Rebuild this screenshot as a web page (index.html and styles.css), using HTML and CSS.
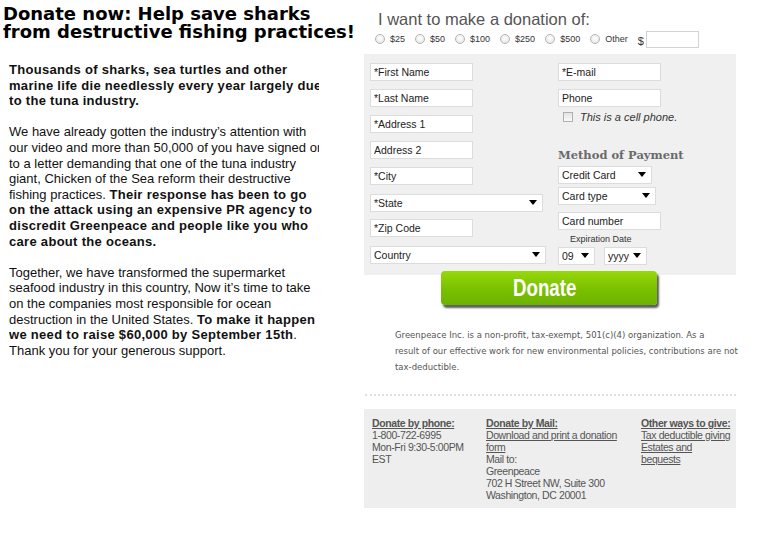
FILE: index.html
```html
<!DOCTYPE html>
<html lang="en">
<head>
    <meta charset="UTF-8">
    <title>Donate now: Help save sharks</title>
    <link rel="stylesheet" href="styles.css">
</head>
<body>
    <div class="story">
        <h1>Donate now: Help save sharks from destructive fishing practices!</h1>
        <div class="story-clip">
            <div class="story-text">
                <p><b>Thousands of sharks, sea turtles and other marine life die needlessly every year largely due to the tuna industry.</b></p>
                <p>We have already gotten the industry’s attention with our video and more than 50,000 of you have signed on to a letter demanding that one of the tuna industry giant, Chicken of the Sea reform their destructive fishing practices. <b>Their response has been to go on the attack using an expensive PR agency to discredit Greenpeace and people like you who care about the oceans.</b></p>
                <p>Together, we have transformed the supermarket seafood industry in this country, Now it’s time to take on the companies most responsible for ocean destruction in the United States. <b>To make it happen we need to raise $60,000 by September 15th</b>. Thank you for your generous support.</p>
            </div>
        </div>
    </div>

    <div class="donate">
        <h2>I want to make a donation of:</h2>
        <div class="amounts">
            <label><input type="radio" name="amount"> $25</label>
            <label><input type="radio" name="amount"> $50</label>
            <label><input type="radio" name="amount"> $100</label>
            <label><input type="radio" name="amount"> $250</label>
            <label><input type="radio" name="amount"> $500</label>
            <label><input type="radio" name="amount"> Other</label>
            <span class="dollar">$</span>
            <input type="text" class="other-amount">
        </div>

        <form class="panel">
            <div class="col">
                <input type="text" class="field" value="*First Name">
                <input type="text" class="field" value="*Last Name">
                <input type="text" class="field" value="*Address 1">
                <input type="text" class="field" value="Address 2">
                <input type="text" class="field" value="*City">
                <span class="pick wide"><select><option>*State</option></select></span>
                <input type="text" class="field" value="*Zip Code">
                <span class="pick wider"><select><option>Country</option></select></span>
            </div>
            <div class="col">
                <input type="text" class="field" value="*E-mail">
                <input type="text" class="field" value="Phone">
                <label class="cell"><input type="checkbox"> This is a cell phone.</label>
                <h3>Method of Payment</h3>
                <span class="pick card"><select><option>Credit Card</option></select></span>
                <span class="pick card type"><select><option>Card type</option></select></span>
                <input type="text" class="field number" value="Card number">
                <div class="expiry">
                    <div class="expiry-label">Expiration Date</div>
                    <div class="expiry-row">
                        <span class="pick month"><select><option>09</option></select></span>
                        <span class="pick year"><select><option>yyyy</option></select></span>
                    </div>
                </div>
            </div>
        </form>

        <div class="submit-row">
            <button type="button" class="donate-btn"><span>Donate</span></button>
        </div>

        <p class="disclaimer">Greenpeace Inc. is a non-profit, tax-exempt, 501(c)(4) organization. As a<br>result of our effective work for new environmental policies, contributions are not tax-deductible.</p>

        <div class="dots"></div>

        <div class="ways">
            <div class="way phone">
                <a href="#">Donate by phone:</a><br>
                1-800-722-6995<br>
                Mon-Fri 9:30-5:00PM<br>
                EST
            </div>
            <div class="way mail">
                <a href="#">Donate by Mail:</a><br>
                <a href="#">Download and print a donation form</a><br>
                Mail to:<br>
                Greenpeace<br>
                702 H Street NW, Suite 300<br>
                Washington, DC 20001
            </div>
            <div class="way other">
                <a href="#">Other ways to give:</a><br>
                <a href="#">Tax deductible giving</a><br>
                <a href="#">Estates and bequests</a>
            </div>
        </div>
    </div>
</body>
</html>
```

FILE: styles.css
```css
body {
    margin: 0;
    background: #fff;
    color: #000;
    font-family: "Liberation Sans", Arial, sans-serif;
    display: flex;
    align-items: flex-start;
}

/* left story column */
.story {
    width: 364px;
    flex: none;
}

h1 {
    margin: 5px 0 0 3px;
    font-family: "DejaVu Sans", Verdana, sans-serif;
    font-size: 18px;
    line-height: 18px;
    font-weight: bold;
    width: 355px;
}

.story-clip {
    margin: 21px 0 0 9px;
    width: 310px;
    overflow: hidden;
}

.story-text {
    width: 316px;
    font-size: 13px;
    line-height: 15.6px;
    color: #111;
}

.story-text b {
    letter-spacing: 0.3px;
}

.story-text p {
    margin: 0 0 15.6px;
}

/* right donation column */
.donate {
    width: 372px;
    flex: none;
}

h2 {
    margin: 10px 0 0 14px;
    font-size: 16.5px;
    line-height: 19px;
    font-weight: normal;
    color: #555;
}

.amounts {
    display: flex;
    align-items: center;
    margin: 0 0 0 11px;
    height: 20px;
    font-size: 9px;
    color: #333;
}

.amounts label {
    display: flex;
    align-items: center;
    gap: 5px;
    margin-right: 10px;
}

.amounts input[type="radio"] {
    appearance: none;
    margin: 0;
    width: 10px;
    height: 10px;
    border-radius: 50%;
    border: 1px solid #b5b5b5;
    background: radial-gradient(circle at 50% 40%, #fff, #e2e2e2);
}

.dollar {
    font-size: 11px;
    margin: 4px 2px 0 0;
}

.other-amount {
    width: 53px;
    height: 17px;
    box-sizing: border-box;
    padding: 0;
    border: 1px solid #d3d3d3;
}

/* gray form panel */
.panel {
    margin-top: 5px;
    background: #f0f0f0;
    height: 221px;
    display: flex;
    padding: 9px 0 0 6px;
    box-sizing: border-box;
    gap: 12px;
}

.col {
    display: flex;
    flex-direction: column;
    align-items: flex-start;
    width: 176px;
}

.col:last-child {
    width: 160px;
}

.field {
    width: 103px;
    height: 18px;
    box-sizing: border-box;
    border: 1px solid #dcdcdc;
    background: #fff;
    padding: 0 3px;
    margin: 0 0 8px;
    font-family: "Liberation Sans", Arial, sans-serif;
    font-size: 10.5px;
    color: #222;
}

.pick {
    position: relative;
    display: block;
    height: 18px;
    margin: 0 0 8px;
}

.pick select {
    appearance: none;
    width: 100%;
    height: 100%;
    border: 1px solid #dcdcdc;
    background: #fff;
    padding: 0 3px;
    font-family: "Liberation Sans", Arial, sans-serif;
    font-size: 10.5px;
    color: #222;
}

.pick::after {
    content: "";
    position: absolute;
    right: 6px;
    top: 7px;
    border-left: 4px solid transparent;
    border-right: 4px solid transparent;
    border-top: 5px solid #000;
    pointer-events: none;
}

.pick.wide { width: 173px; }
.pick.wider { width: 176px; }
.pick.card { width: 94px; margin-bottom: 3px; }
.pick.card.type { width: 98px; margin-bottom: 8px; }
.pick.month { width: 37px; margin: 0; }
.pick.year { width: 43px; margin: 0; }

.cell {
    display: flex;
    align-items: center;
    gap: 7px;
    margin: -4px 0 0 5px;
    height: 12px;
    font-size: 11px;
    font-style: italic;
    color: #333;
}

.cell input {
    appearance: none;
    margin: 0;
    width: 10px;
    height: 10px;
    border: 1px solid #b0b0b0;
    background: linear-gradient(#e4e4e4, #fafafa);
}

h3 {
    margin: 25px 0 3px;
    font-family: "DejaVu Serif", Georgia, serif;
    font-size: 11.5px;
    line-height: 14px;
    color: #6a6a6a;
}

.field.number {
    margin-bottom: 4px;
}

.expiry-label {
    font-size: 9px;
    color: #333;
    margin: 0 0 2px 12px;
    line-height: 10px;
}

.expiry-row {
    display: flex;
    gap: 9px;
}

/* donate button */
.submit-row {
    margin-top: -4px;
    padding-left: 77px;
}

.donate-btn {
    width: 216px;
    height: 34px;
    padding: 0 9px 0 0;
    border: none;
    border-radius: 4px;
    background: linear-gradient(#97d80a, #79c000 55%, #6db300);
    box-shadow: 2px 3px 2px rgba(40, 40, 40, 0.75);
    color: #fff;
    font-family: "Liberation Sans", Arial, sans-serif;
    font-size: 24px;
    font-weight: bold;
    cursor: pointer;
}

.donate-btn span {
    display: inline-block;
    transform: scaleX(0.78);
}

.disclaimer {
    margin: 22px 0 0 31px;
    width: 350px;
    font-family: "DejaVu Sans", Verdana, sans-serif;
    font-size: 8.5px;
    line-height: 16px;
    color: #555;
}

.dots {
    margin: 19px 0 0 1px;
    height: 0;
    border-top: 2px dotted #e0e0e0;
}

.ways {
    margin-top: 13px;
    background: #eee;
    height: 99px;
    box-sizing: border-box;
    padding: 8px 0 0 8px;
    display: flex;
    font-size: 10.5px;
    letter-spacing: -0.4px;
    line-height: 12px;
    color: #555;
}

.ways a {
    color: #555;
}

.way.phone { width: 114px; }
.way.mail { width: 140px; margin-right: 15px; }
.way.other { width: 90px; }

.way a:first-child {
    font-weight: bold;
}
```
